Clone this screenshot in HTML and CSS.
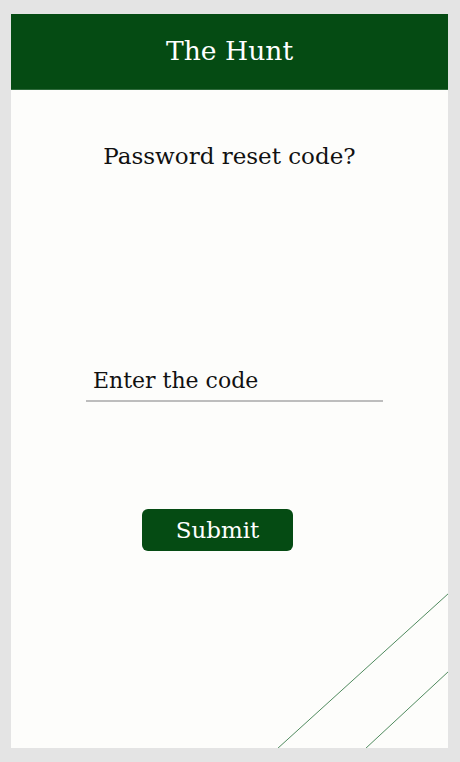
FILE: index.html
```html
<!DOCTYPE html>
<html lang="en">
<head>
<meta charset="utf-8">
<title>The Hunt</title>
<link rel="stylesheet" href="styles.css">
</head>
<body>
<div class="card">
  <header class="header"><h1 class="title">The Hunt</h1></header>
  <main class="content">
    <p class="question">Password reset code?</p>
    <div class="code-field"><span class="code-text">Enter the code</span></div>
    <button class="submit" type="button">Submit</button>
  </main>
  <svg class="deco" width="180" height="160" viewBox="0 0 180 160" aria-hidden="true">
    <line x1="181" y1="5" x2="9" y2="161" stroke="#4f8a5e" stroke-width="1"/>
    <line x1="181" y1="83" x2="97" y2="161" stroke="#4f8a5e" stroke-width="1"/>
  </svg>
</div>
</body>
</html>
```
FILE: styles.css
```css
html, body {
  margin: 0;
  padding: 0;
}
body {
  background: #e4e4e4;
  padding: 14px 12px 14px 11px;
  font-family: "DejaVu Serif", "Liberation Serif", serif;
  color: #111;
}
.card {
  position: relative;
  width: 437px;
  height: 734px;
  background: #fdfdfb;
  overflow: hidden;
  display: flex;
  flex-direction: column;
}
.header {
  height: 75px;
  background: #054b13;
  border-bottom: 1px solid #2f6b3c;
  display: flex;
  align-items: center;
  justify-content: center;
}
.title {
  margin: 0;
  font-weight: normal;
  font-size: 26.6px;
  color: #fff;
  line-height: 1;
}
.content {
  display: flex;
  flex-direction: column;
}
.question {
  margin: 53px 0 0;
  text-align: center;
  font-size: 23px;
  line-height: 26px;
}
.code-field {
  margin: 199px 0 0 75px;
  width: 297px;
  border-bottom: 2px solid #bdbdbd;
  padding: 0 0 6px 7px;
  box-sizing: border-box;
}
.code-text {
  font-size: 22px;
  line-height: 26px;
}
.submit {
  margin: 107px 0 0 131px;
  width: 151px;
  height: 42px;
  border: none;
  border-radius: 6px;
  background: #054b13;
  color: #fff;
  font-family: inherit;
  font-size: 23px;
  padding: 0;
  align-self: flex-start;
}
.deco {
  position: absolute;
  right: 0;
  bottom: 0;
}
```
